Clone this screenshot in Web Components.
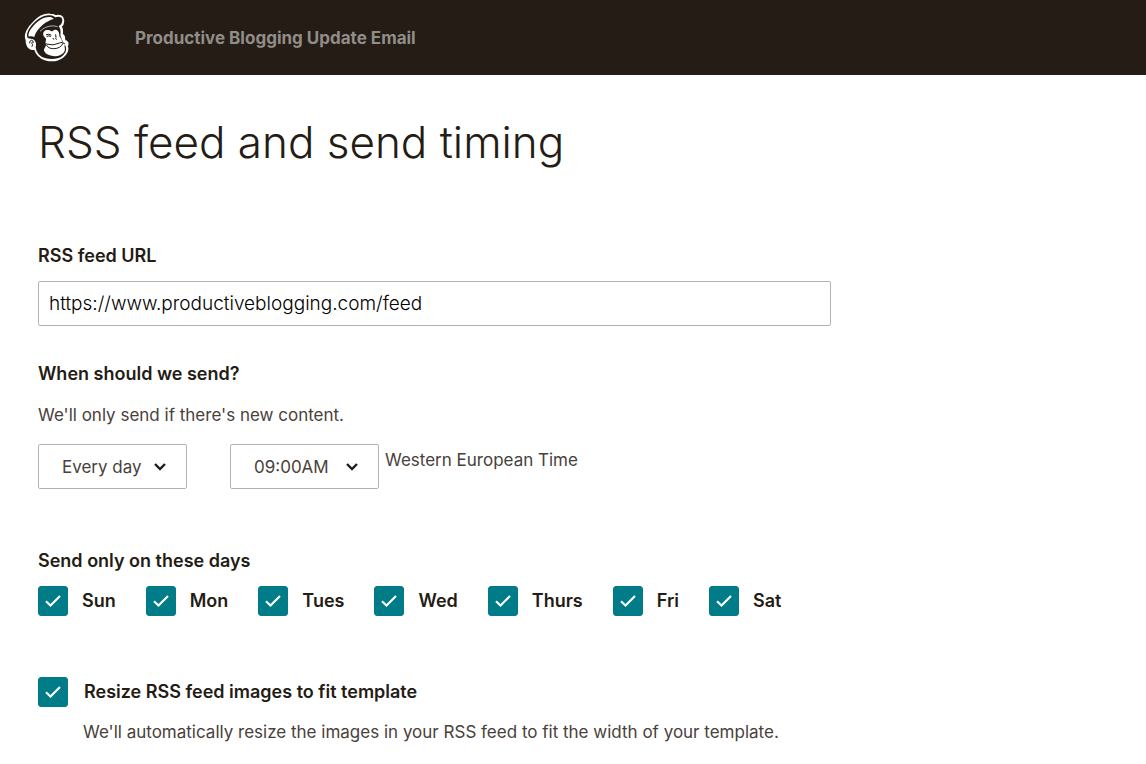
<!DOCTYPE html>
<html lang="en">
<head>
<meta charset="utf-8">
<meta name="viewport" content="width=device-width, initial-scale=1">
<title>RSS feed and send timing</title>
<style>
  body {
    margin: 0;
    background: #fff;
    color: #241c15;
    font: 400 17px/24px Inter, "Liberation Sans", sans-serif;
  }
</style>
</head>
<body>
<campaign-page></campaign-page>

<template id="brand-logo">
  <style>
    :host { display: block; width: 46px; height: 50px; }
    svg { display: block; }
  </style>
  <svg width="46" height="50" viewBox="43 25 138 150" role="img" aria-label="Mailchimp">
    <path d="M51 106C42 92 55 68 72 53C86 37 103 28 121 29C128 29 133 31 138 34C149 31 160 34 161 46C162 55 159 61 154 65C158 72 158 81 157 88C164 93 165 101 164 108C173 109 177 116 172 124C177 136 170 149 159 157C144 168 123 169 108 165C91 160 80 148 75 132C65 137 54 129 52 118C50 113 50 110 51 106Z" fill="#fff" stroke="#fff" stroke-width="5" stroke-linejoin="round"/>
    <path d="M54 100C47 86 60 66 76 51C91 37 107 30 121 32C129 33 134 36 137 38C150 34 157 38 158 46C158 53 155 62 147 64C153 73 154 82 152 92L157 106L168 125C172 137 167 147 157 155C147 163 126 165 108 161C90 157 80 143 78 128C82 115 76 104 66 103Z" fill="#241c15"/>
    <path d="M57 96C54 84 64 71 77 57C91 43 107 35 121 37C127 38 130 40 132 43C116 47 100 58 89 71C80 80 76 89 74 97C69 94 62 94 57 96Z" fill="#fff"/>
    <path d="M92 79C101 70 112 65 124 64C132 63 138 65 143 66" fill="none" stroke="#fff" stroke-width="2" stroke-linecap="round"/>
    <path d="M101 91C99 82 105 76 114 76C121 75 124 80 128 80C132 76 139 73 145 79C149 84 149 90 149 95C155 101 157 107 157 111C162 109 168 113 167 119C165 122 164 124 165 128C168 139 162 147 151 152C138 157 121 154 110 147C103 142 101 135 105 130C108 126 110 122 108 116C107 107 112 104 107 100C104 97 102 95 101 91Z" fill="#fff"/>
    <path d="M110 90Q117 86 124 91M112 95Q118 91 123 95M138 90L139 98M130 101L132 104M138 101L140 104M109 118Q131 125 150 115Q158 109 165 117M111 122Q115 132 132 132Q153 132 160 116" fill="none" stroke="#241c15" stroke-width="3" stroke-linecap="round"/>
    <path d="M52 112C54 104 65 100 73 107C79 114 77 127 71 131C62 134 52 125 52 112Z" fill="#fff"/>
    <path d="M60 115C59 105 70 104 71 113C65 111 64 116 69 119L67 125" fill="none" stroke="#241c15" stroke-width="3" stroke-linecap="round"/>
  </svg>
</template>

<template id="app-header">
  <style>
    :host {
      display: flex;
      align-items: center;
      gap: 65px;
      box-sizing: border-box;
      min-height: 75px;
      padding: 0 24px;
      background: #241c15;
      color: #918d88;
      font-weight: 700;
    }
  </style>
  <brand-logo></brand-logo>
  <slot></slot>
</template>

<template id="form-field">
  <style>
    :host { display: block; }
    label { display: block; margin-bottom: 13px; font-size: 18px; font-weight: 600; }
    input {
      display: block;
      box-sizing: border-box;
      width: 100%;
      height: 45px;
      padding: 0 10px;
      border: 1px solid #b5b3b0;
      border-radius: 2px;
      background: #fff;
      color: #000;
      font: inherit;
      font-size: 19px;
      font-weight: 300;
    }
  </style>
  <label for="box"></label>
  <input id="box" type="text">
</template>

<template id="drop-down">
  <style>
    :host { display: inline-grid; grid-template-columns: 149px; align-items: center; }
    select, svg { grid-area: 1 / 1; }
    select {
      appearance: none;
      box-sizing: border-box;
      width: 100%;
      height: 45px;
      padding: 0 23px;
      border: 1px solid #b5b3b0;
      border-radius: 2px;
      background: #fff;
      color: inherit;
      font: inherit;
    }
    svg { justify-self: end; margin-right: 20px; pointer-events: none; }
  </style>
  <select></select>
  <svg width="14" height="10" viewBox="0 0 14 10" aria-hidden="true"><path d="M2 2L7 7L12 2" fill="none" stroke="#241c15" stroke-width="2.400"/></svg>
</template>

<template id="tick-box">
  <style>
    :host { display: block; }
    label { display: flex; align-items: center; gap: var(--tick-gap, 14px); font-size: 18px; font-weight: 600; }
    .box { display: grid; place-items: center; }
    input, svg { grid-area: 1 / 1; }
    input {
      appearance: none;
      width: 30px;
      height: 30px;
      margin: 0;
      border: 1px solid #007c89;
      border-radius: 3px;
    }
    input:checked { background: #007c89; }
    svg { pointer-events: none; visibility: hidden; }
    input:checked + svg { visibility: visible; }
  </style>
  <label>
    <span class="box">
      <input type="checkbox" checked>
      <svg width="18" height="14" viewBox="0 0 18 14" aria-hidden="true"><path d="M2 7.300L6.500 11.500L16 2" fill="none" stroke="#fff" stroke-width="2.200"/></svg>
    </span>
    <slot></slot>
  </label>
</template>

<template id="campaign-page">
  <style>
    :host { display: block; }
    main { max-width: 793px; padding: 40px 38px 20px; }
    h1 { margin: 0; font-size: 44px; line-height: 54px; font-weight: 300; }
    h2 { margin: 0; font-size: 18px; line-height: 24px; font-weight: 600; }
    p { margin: 0; color: #48413b; }
    form-field { margin-top: 75px; }
    section { margin-top: 36px; }
    .hint { margin-top: 17px; }
    .schedule { display: flex; flex-wrap: wrap; margin-top: 17px; color: #48413b; }
    .schedule drop-down + drop-down { margin-left: 43px; }
    .zone { margin: 4px 0 0 6px; }
    .days-section { margin-top: 60px; }
    .days { display: flex; flex-wrap: wrap; gap: 16px 30px; margin-top: 13px; }
    .resize { margin-top: 61px; --tick-gap: 16px; }
    .resize p { margin: 13px 0 0 45px; }
  </style>
  <app-header>Productive Blogging Update Email</app-header>
  <main>
    <h1>RSS feed and send timing</h1>
    <form-field label="RSS feed URL" value="https://www.productiveblogging.com/feed"></form-field>
    <section>
      <h2>When should we send?</h2>
      <p class="hint">We'll only send if there's new content.</p>
      <div class="schedule">
        <drop-down label="Frequency" value="Every day"></drop-down>
        <drop-down label="Time of day" value="09:00AM"></drop-down>
        <p class="zone">Western European Time</p>
      </div>
    </section>
    <section class="days-section">
      <h2>Send only on these days</h2>
      <div class="days">
        <tick-box>Sun</tick-box>
        <tick-box>Mon</tick-box>
        <tick-box>Tues</tick-box>
        <tick-box>Wed</tick-box>
        <tick-box>Thurs</tick-box>
        <tick-box>Fri</tick-box>
        <tick-box>Sat</tick-box>
      </div>
    </section>
    <section class="resize">
      <tick-box>Resize RSS feed images to fit template</tick-box>
      <p>We'll automatically resize the images in your RSS feed to fit the width of your template.</p>
    </section>
  </main>
</template>

<script>
  class TemplateElement extends HTMLElement {
    constructor() {
      super();
      const template = document.getElementById(this.localName);
      this.attachShadow({ mode: "open" }).append(template.content.cloneNode(true));
    }
  }

  class BrandLogo extends TemplateElement {}
  class AppHeader extends TemplateElement {}
  class TickBox extends TemplateElement {}
  class CampaignPage extends TemplateElement {}

  class FormField extends TemplateElement {
    connectedCallback() {
      this.shadowRoot.querySelector("label").textContent = this.getAttribute("label");
      this.shadowRoot.querySelector("input").value = this.getAttribute("value");
    }
  }

  class DropDown extends TemplateElement {
    connectedCallback() {
      const select = this.shadowRoot.querySelector("select");
      select.setAttribute("aria-label", this.getAttribute("label"));
      select.replaceChildren(new Option(this.getAttribute("value")));
    }
  }

  customElements.define("brand-logo", BrandLogo);
  customElements.define("app-header", AppHeader);
  customElements.define("form-field", FormField);
  customElements.define("drop-down", DropDown);
  customElements.define("tick-box", TickBox);
  customElements.define("campaign-page", CampaignPage);
</script>
</body>
</html>
